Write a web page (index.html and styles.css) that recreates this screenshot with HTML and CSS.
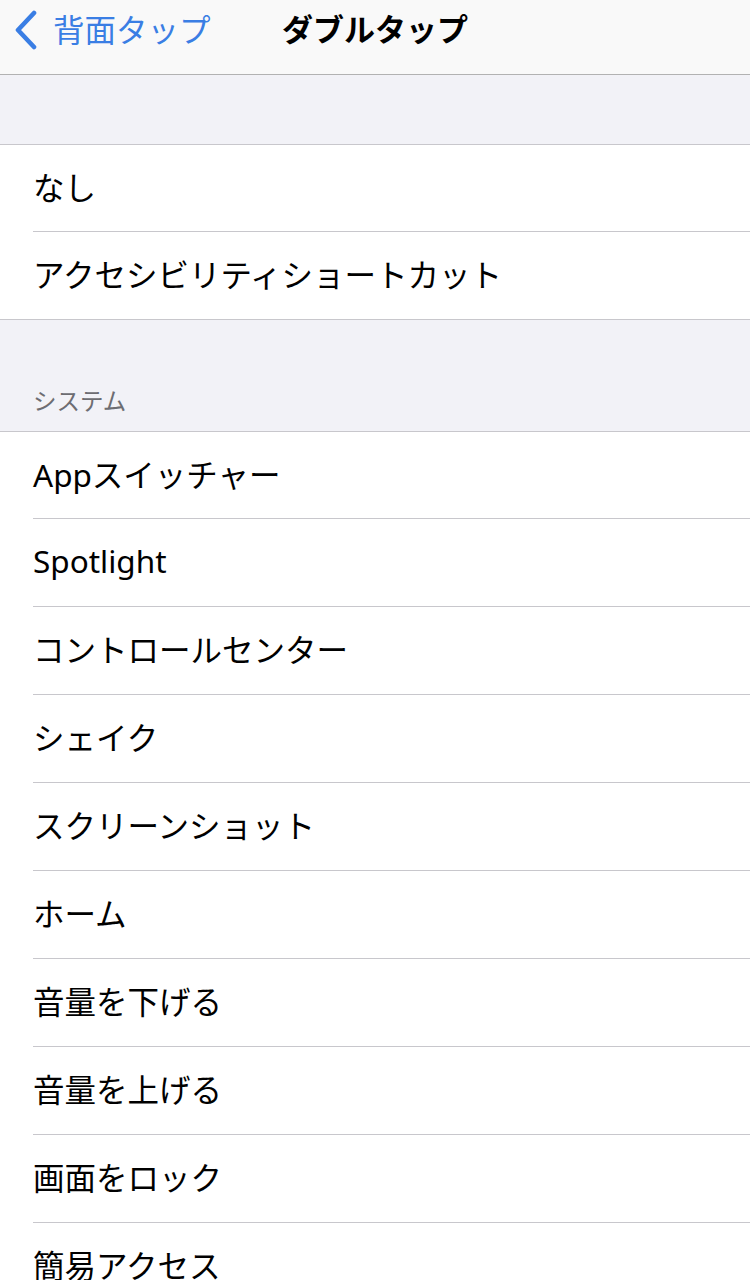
FILE: index.html
```html
<!DOCTYPE html>
<html lang="ja">
<head>
<meta charset="UTF-8">
<meta name="viewport" content="width=device-width, initial-scale=1.0">
<title>ダブルタップ</title>
<link rel="stylesheet" href="styles.css">
</head>
<body>

<div class="navbar">
    <div class="back">
        <svg class="chevron" width="26" height="40" viewBox="0 0 26 40">
            <path d="M20 3 L4 20 L20 37" fill="none" stroke="#3a7ee4" stroke-width="4.6" stroke-linecap="round" stroke-linejoin="round"/>
        </svg>
        <span>背面タップ</span>
    </div>
    <h1 class="title">ダブルタップ</h1>
</div>

<div class="spacer"></div>

<ul class="group">
    <li>なし</li>
    <li>アクセシビリティショートカット</li>
</ul>

<div class="section-header">システム</div>

<ul class="group">
    <li>Appスイッチャー</li>
    <li>Spotlight</li>
    <li>コントロールセンター</li>
    <li>シェイク</li>
    <li>スクリーンショット</li>
    <li>ホーム</li>
    <li>音量を下げる</li>
    <li>音量を上げる</li>
    <li>画面をロック</li>
    <li>簡易アクセス</li>
</ul>

</body>
</html>
```

FILE: styles.css
```css
body {
    font-family: "Noto Sans", "Noto Sans CJK JP", sans-serif;
    margin: 0;
    padding: 0;
    background-color: #f2f2f7;
    color: #000;
}

.navbar {
    position: relative;
    height: 74px;
    background-color: #f9f9f9;
    border-bottom: 1px solid #b2b2b2;
    display: flex;
    align-items: center;
    justify-content: center;
}

.back {
    position: absolute;
    left: 14px;
    top: 10px;
    display: flex;
    align-items: center;
    gap: 13px;
    color: #3a7ee4;
    font-size: 31.5px;
    line-height: 40px;
}

.title {
    margin: 0;
    font-size: 31px;
    font-weight: bold;
    line-height: 40px;
    margin-top: -16px;
}

.spacer {
    height: 69px;
}

.group {
    list-style: none;
    margin: 0;
    padding: 0 0 0 33px;
    background-color: #fff;
    border-top: 1px solid #c8c7cc;
    border-bottom: 1px solid #c8c7cc;
}

.group li {
    box-sizing: border-box;
    height: 88px;
    padding-bottom: 5px;
    display: flex;
    align-items: center;
    font-size: 31.5px;
    border-bottom: 1px solid #c8c7cc;
}

.group li:first-child {
    height: 87px;
}

.group li:last-child {
    height: 87px;
    border-bottom: none;
}

.section-header {
    height: 111px;
    box-sizing: border-box;
    padding: 0 0 14px 33px;
    display: flex;
    align-items: flex-end;
    font-size: 23.5px;
    color: #6d6d72;
}
```
